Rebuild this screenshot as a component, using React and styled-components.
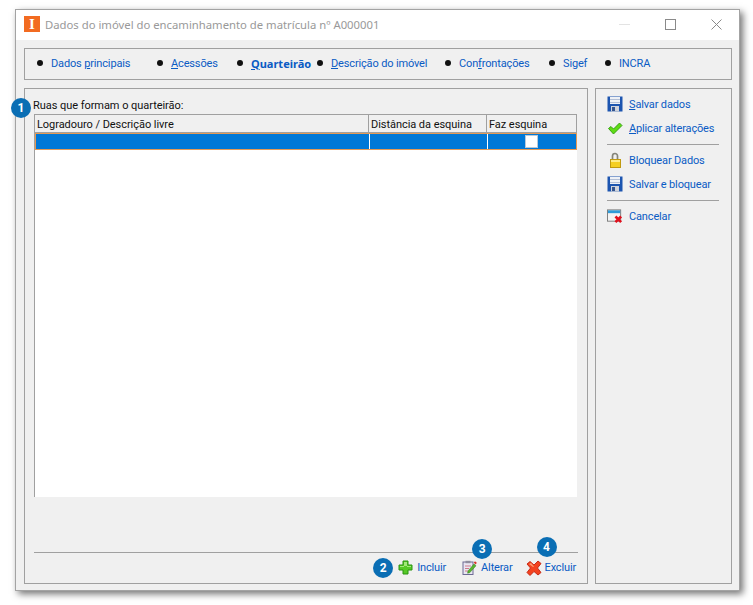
import React from 'react';
import styled, { createGlobalStyle } from 'styled-components';

const GlobalStyle = createGlobalStyle`
  html, body {
    margin: 0;
    padding: 0;
    background: #fff;
  }
  body {
    font-family: Roboto, "Noto Sans", sans-serif;
    font-size: 11px;
  }
  * {
    box-sizing: border-box;
  }
`;

const Page = styled.div`
  width: 753px;
  height: 605px;
  padding: 9px 0 0 15px;
  overflow: hidden;
`;

const Window = styled.div`
  width: 725px;
  height: 582px;
  background: #f0f0f0;
  border: 1px solid #a3a3a3;
  box-shadow: 3px 3px 7px rgba(0, 0, 0, 0.55);
  display: flex;
  flex-direction: column;
`;

const TitleBar = styled.div`
  height: 30px;
  background: #fff;
  display: flex;
  align-items: center;
  padding: 0 0 2px 8px;
  flex-shrink: 0;
`;

const AppLogo = styled.div`
  width: 16px;
  height: 16px;
  background: #f26b21;
  color: #fff;
  font-family: "Liberation Serif", serif;
  font-weight: bold;
  font-size: 15px;
  line-height: 16px;
  text-align: center;
`;

const Title = styled.div`
  margin-left: 5px;
  font-family: "Noto Sans", sans-serif;
  font-size: 11.3px;
  color: #999;
  flex: 1;
`;

const WinButtons = styled.div`
  display: flex;
  align-items: center;
`;

const WinButton = styled.div`
  width: 46px;
  height: 28px;
  display: flex;
  align-items: center;
  justify-content: center;
`;

const Content = styled.div`
  flex: 1;
  padding: 8px 7px 6px 8px;
  display: flex;
  flex-direction: column;
  gap: 8px;
`;

const Panel = styled.div`
  border: 1px solid #a0a0a0;
  background: #f0f0f0;
`;

const TabBar = styled(Panel)`
  height: 32px;
  display: flex;
  align-items: center;
  padding: 0 0 2px 12px;
`;

const Tab = styled.div`
  width: ${(p) => p.$width}px;
  display: flex;
  align-items: center;
  flex-shrink: 0;
`;

const Bullet = styled.span`
  width: 6px;
  height: 6px;
  border-radius: 50%;
  background: #111;
  margin-right: 8px;
  flex-shrink: 0;
`;

const LinkText = styled.span`
  color: #0a5bc4;
  font-family: ${(p) => (p.$active ? '"Noto Sans", sans-serif' : 'inherit')};
  font-weight: ${(p) => (p.$active ? 'bold' : 'normal')};
  letter-spacing: ${(p) => (p.$active ? '0' : '-0.15px')};
  white-space: nowrap;
`;

const Key = styled.span`
  text-decoration: underline;
`;

const Main = styled.div`
  flex: 1;
  display: flex;
  gap: 7px;
`;

const LeftPanel = styled(Panel)`
  position: relative;
  width: 564px;
  padding: 0 9px;
  display: flex;
  flex-direction: column;
`;

const FieldLabel = styled.div`
  height: 25px;
  line-height: 15px;
  padding-top: 9px;
  margin-left: -1px;
  letter-spacing: -0.05px;
  color: #111;
`;

const Grid = styled.div`
  height: 383px;
  width: 543px;
  background: #fff;
  border-left: 1px solid #a0a0a0;
  display: flex;
  flex-direction: column;
`;

const Columns = `
  display: grid;
  grid-template-columns: 334px 118px 89px;
`;

const HeaderRow = styled.div`
  ${Columns}
  height: 19px;
  background: #f0f0f0;
  border-top: 1px solid #a0a0a0;
  border-right: 1px solid #a0a0a0;
  border-bottom: 1px solid #a0a0a0;
`;

const HeaderCell = styled.div`
  padding-left: 2px;
  line-height: 20px;
  letter-spacing: -0.05px;
  color: #111;
  white-space: nowrap;
  border-right: ${(p) => (p.$last ? 'none' : '1px solid #a0a0a0')};
`;

const SelectedRow = styled.div`
  ${Columns}
  height: 17px;
  background: #0078d7;
  border: 1px solid #e59a55;
`;

const RowCell = styled.div`
  border-right: ${(p) => (p.$last ? 'none' : '1px solid #fff')};
  display: flex;
  align-items: center;
  justify-content: center;
`;

const CheckBox = styled.div`
  width: 13px;
  height: 13px;
  margin-right: 2px;
  background: #fff;
  border: 1px solid #b9c9d8;
`;

const Spacer = styled.div`
  flex: 1;
`;

const Footer = styled.div`
  border-top: 1px solid #a0a0a0;
  height: 31px;
  width: 544px;
  display: flex;
  justify-content: flex-end;
  align-items: center;
  padding: 0 2px 1px 0;
`;

const FooterAction = styled.div`
  position: relative;
  display: flex;
  align-items: center;
  gap: 3px;
  margin-left: ${(p) => p.$gap}px;
`;

const Badge = styled.div`
  position: absolute;
  top: ${(p) => p.$top}px;
  left: ${(p) => p.$left}px;
  width: 20px;
  height: 20px;
  border-radius: 50%;
  background: #0a6eb4;
  color: #fff;
  font-weight: bold;
  font-size: 12px;
  line-height: 20px;
  text-align: center;
`;

const SidePanel = styled(Panel)`
  width: 137px;
  padding: 3px 12px 0 11px;
  display: flex;
  flex-direction: column;
`;

const SideAction = styled.div`
  height: 24px;
  display: flex;
  align-items: center;
  gap: 6px;
  white-space: nowrap;
`;

const IconSlot = styled.span`
  width: 16px;
  height: 16px;
  display: flex;
  flex-shrink: 0;
`;

const SideDivider = styled.div`
  height: 1px;
  background: #a0a0a0;
  margin: 4px 0 3px;
`;

const FloppyIcon = () => (
  <svg width="16" height="16" viewBox="0 0 16 16">
    <rect x="0.5" y="0.5" width="15" height="15" fill="#1c55b0" />
    <rect x="3" y="1" width="10" height="7" fill="#eef1f6" />
    <rect x="3" y="3" width="10" height="1" fill="#b4c0d6" />
    <rect x="3" y="6" width="10" height="1" fill="#b4c0d6" />
    <rect x="4" y="10" width="8" height="5.5" fill="#d0d3da" />
    <rect x="5" y="11" width="3" height="4" fill="#34558f" />
  </svg>
);

const CheckIcon = () => (
  <svg width="16" height="16" viewBox="0 0 16 16">
    <path d="M1.500 8.500L4 6.500l2.500 2.500L12.500 3 15 5.500 6.500 14z" fill="#5fdc14" stroke="#2e9a0c" strokeWidth="0.9" strokeLinejoin="round" />
  </svg>
);

const LockIcon = () => (
  <svg width="16" height="16" viewBox="0 0 16 16">
    <path d="M5.500 8V4a2.500 2.500 0 0 1 5 0v4" fill="none" stroke="#85857a" strokeWidth="1.700" />
    <rect x="3.500" y="7.500" width="10" height="8" fill="#f5cf22" stroke="#c09a10" />
    <rect x="4" y="8" width="9" height="2" fill="#fdec88" />
  </svg>
);

const CancelWindowIcon = () => (
  <svg width="17" height="16" viewBox="0 0 17 16">
    <rect x="0.500" y="1.500" width="14" height="12" fill="#f4f4f4" stroke="#7a7a7a" />
    <rect x="1" y="2" width="13" height="3" fill="#2f9bd8" />
    <path d="M9 8.500l6 6M15 8.500l-6 6" stroke="#e0101c" strokeWidth="2.800" />
  </svg>
);

const PlusIcon = () => (
  <svg width="15" height="15" viewBox="0 0 15 15">
    <path d="M5 1h5v4h4v5h-4v4H5v-4H1V5h4z" fill="#56c926" stroke="#2a9410" strokeLinejoin="round" />
    <path d="M6 2h3v4h4v1H9V6H6zM2 6h4v1H2z" fill="#a2e87a" />
  </svg>
);

const NoteIcon = () => (
  <svg width="15" height="15" viewBox="0 0 15 15">
    <rect x="1" y="2" width="10" height="12.500" fill="#e9e6f2" stroke="#6d6a94" />
    <rect x="3.500" y="0.800" width="5" height="2.400" fill="#8f8d9e" />
    <path d="M3 6h6M3 8.500h4M3 11h3" stroke="#d07a8a" strokeWidth="1" />
    <path d="M6 11l6-7 2 1.800L7.600 12.800 5.600 13.200z" fill="#58b42e" stroke="#2f7a16" strokeWidth="0.500" />
    <path d="M11.800 2.800l1.200-1.600 1.800 1.500-1 1.800z" fill="#d8352a" />
  </svg>
);

const CrossIcon = () => (
  <svg width="16" height="16" viewBox="0 0 16 16">
    <path d="M1 4L4 1.500 8 5l4-4 3 2.500L11.500 8l3.500 4.500-3 2.500-4-3.500L4 15.500 1 12.500 4.500 8z" fill="#f3421f" stroke="#c2200c" strokeWidth="0.900" strokeLinejoin="round" />
    <path d="M3 4l2-1 3 3.500L7 7z" fill="#ff9a70" />
  </svg>
);

const tabs = [
  { width: 120, before: 'Dados ', key: 'p', after: 'rincipais' },
  { width: 80, key: 'A', after: 'cessões' },
  { width: 80, key: 'Q', after: 'uarteirão', active: true },
  { width: 128, key: 'D', after: 'escrição do imóvel' },
  { width: 104, before: 'Con', key: 'f', after: 'rontações' },
  { width: 56, before: 'Sigef' },
  { width: 60, before: 'INCRA' }
];

export default function App() {
  return (
    <Page>
      <GlobalStyle />
      <Window>
        <TitleBar>
          <AppLogo>I</AppLogo>
          <Title>Dados do imóvel do encaminhamento de matrícula nº A000001</Title>
          <WinButtons>
            <WinButton>
              <svg width="11" height="11" viewBox="0 0 11 11">
                <path d="M0 5.500h11" stroke="#e3e3e3" />
              </svg>
            </WinButton>
            <WinButton>
              <svg width="11" height="11" viewBox="0 0 11 11">
                <rect x="0.500" y="0.500" width="10" height="10" fill="none" stroke="#8a8a8a" />
              </svg>
            </WinButton>
            <WinButton>
              <svg width="11" height="11" viewBox="0 0 11 11">
                <path d="M0.500 0.500l10 10M10.500 0.500l-10 10" stroke="#8a8a8a" />
              </svg>
            </WinButton>
          </WinButtons>
        </TitleBar>
        <Content>
          <TabBar>
            {tabs.map((t, i) => (
              <Tab key={i} $width={t.width}>
                <Bullet />
                <LinkText $active={t.active}>
                  {t.before}
                  {t.key && <Key>{t.key}</Key>}
                  {t.after}
                </LinkText>
              </Tab>
            ))}
          </TabBar>
          <Main>
            <LeftPanel>
              <Badge $top={9} $left={-14}>1</Badge>
              <FieldLabel>Ruas que formam o quarteirão:</FieldLabel>
              <Grid>
                <HeaderRow>
                  <HeaderCell>Logradouro / Descrição livre</HeaderCell>
                  <HeaderCell>Distância da esquina</HeaderCell>
                  <HeaderCell $last>Faz esquina</HeaderCell>
                </HeaderRow>
                <SelectedRow>
                  <RowCell />
                  <RowCell />
                  <RowCell $last>
                    <CheckBox />
                  </RowCell>
                </SelectedRow>
              </Grid>
              <Spacer />
              <Footer>
                <FooterAction $gap={0}>
                  <Badge $top={-2} $left={-25}>2</Badge>
                  <IconSlot><PlusIcon /></IconSlot>
                  <LinkText>Incluir</LinkText>
                </FooterAction>
                <FooterAction $gap={16}>
                  <Badge $top={-21} $left={10}>3</Badge>
                  <IconSlot><NoteIcon /></IconSlot>
                  <LinkText>Alterar</LinkText>
                </FooterAction>
                <FooterAction $gap={13}>
                  <Badge $top={-23} $left={11}>4</Badge>
                  <IconSlot><CrossIcon /></IconSlot>
                  <LinkText>Excluir</LinkText>
                </FooterAction>
              </Footer>
            </LeftPanel>
            <SidePanel>
              <SideAction>
                <IconSlot><FloppyIcon /></IconSlot>
                <LinkText><Key>S</Key>alvar dados</LinkText>
              </SideAction>
              <SideAction>
                <IconSlot><CheckIcon /></IconSlot>
                <LinkText><Key>A</Key>plicar alterações</LinkText>
              </SideAction>
              <SideDivider />
              <SideAction>
                <IconSlot><LockIcon /></IconSlot>
                <LinkText>Bloquear Dados</LinkText>
              </SideAction>
              <SideAction>
                <IconSlot><FloppyIcon /></IconSlot>
                <LinkText>Salvar e bloquear</LinkText>
              </SideAction>
              <SideDivider />
              <SideAction>
                <IconSlot><CancelWindowIcon /></IconSlot>
                <LinkText>Cancelar</LinkText>
              </SideAction>
            </SidePanel>
          </Main>
        </Content>
      </Window>
    </Page>
  );
}
